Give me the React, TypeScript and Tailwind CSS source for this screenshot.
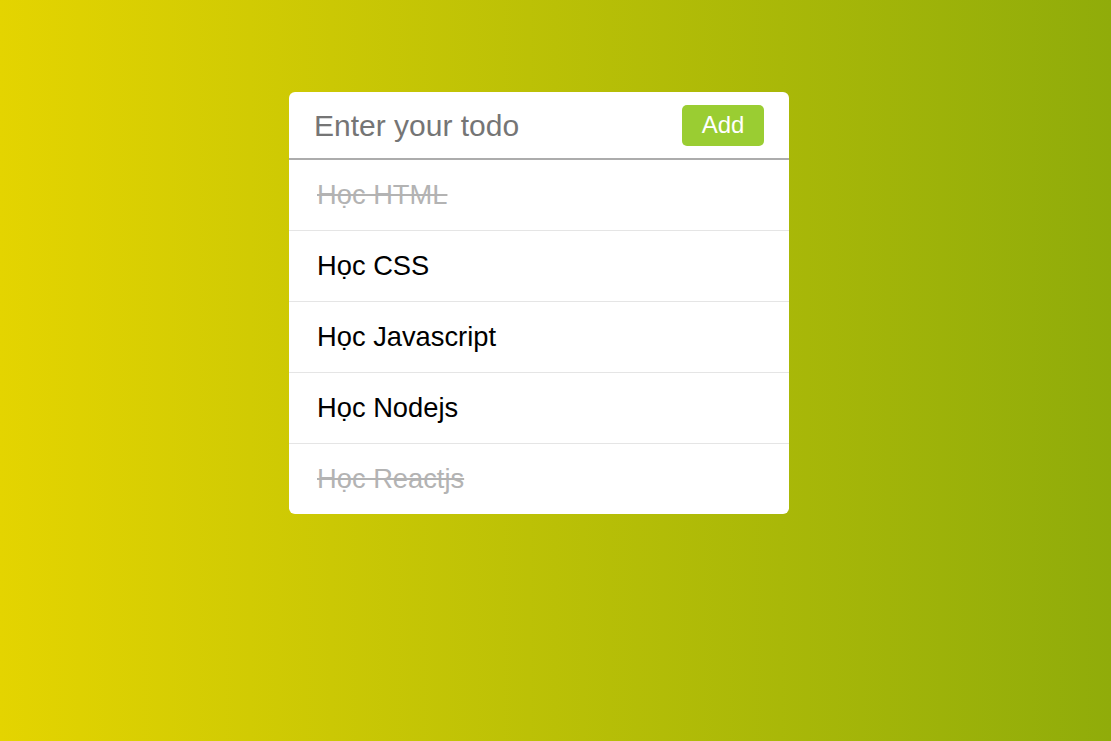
import React, { useState } from 'react';

interface Todo {
  id: number;
  title: string;
  done: boolean;
}

const initialTodos: Todo[] = [
  { id: 1, title: 'Học HTML', done: true },
  { id: 2, title: 'Học CSS', done: false },
  { id: 3, title: 'Học Javascript', done: false },
  { id: 4, title: 'Học Nodejs', done: false },
  { id: 5, title: 'Học Reactjs', done: true },
];

export default function App() {
  const [todos, setTodos] = useState<Todo[]>(initialTodos);
  const [text, setText] = useState('');

  const addTodo = () => {
    if (!text.trim()) return;
    setTodos([...todos, { id: Date.now(), title: text.trim(), done: false }]);
    setText('');
  };

  const toggle = (id: number) => {
    setTodos(todos.map(t => (t.id === id ? { ...t, done: !t.done } : t)));
  };

  return (
    <div
      className="flex min-h-[741px] w-full justify-center bg-gradient-to-r from-[#e4d400] to-[#90ac0a] pr-[33px] pt-[92px]"
      style={{ fontFamily: '"Liberation Sans", Arial, sans-serif' }}
    >
      <div className="h-fit w-[500px] overflow-hidden rounded-[6px] bg-white">
        <div className="flex h-[68px] items-center border-b-2 border-[#acacac] pl-[25px] pr-[25px]">
          <input
            type="text"
            className="min-w-0 flex-1 bg-transparent text-[30px] text-black outline-none placeholder:text-[#757575]"
            placeholder="Enter your todo"
            value={text}
            onChange={e => setText(e.target.value)}
            onKeyDown={e => e.key === 'Enter' && addTodo()}
          />
          <button
            className="h-[41px] w-[82px] shrink-0 rounded-[5px] bg-[#9acd32] text-[24px] text-white"
            onClick={addTodo}
          >
            Add
          </button>
        </div>
        <ul>
          {todos.map((todo, index) => (
            <li
              key={todo.id}
              className={`box-content flex h-[70px] cursor-pointer items-center pl-[28px] text-[27.3px] ${
                index < todos.length - 1 ? 'border-b border-[#e5e5e5]' : ''
              } ${todo.done ? 'text-[#b3b3b3] line-through' : 'text-black'}`}
              onClick={() => toggle(todo.id)}
            >
              {todo.title}
            </li>
          ))}
        </ul>
      </div>
    </div>
  );
}
